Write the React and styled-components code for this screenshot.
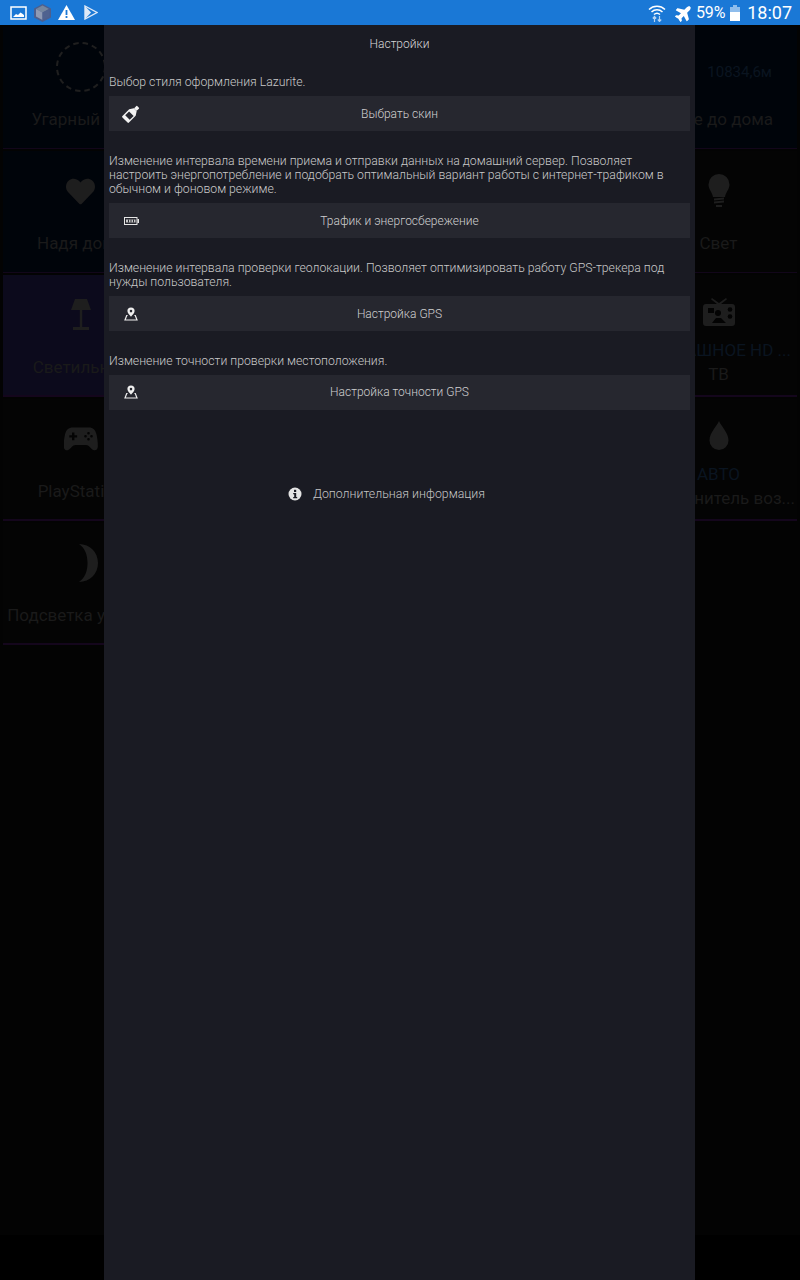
import React from "react";
import styled, { createGlobalStyle } from "styled-components";
import { FaHeart, FaPlane } from "react-icons/fa";

const GlobalStyle = createGlobalStyle`
  html, body {
    margin: 0;
    padding: 0;
    background: #000;
    font-family: Roboto, "Liberation Sans", sans-serif;
  }
`;

const leftTiles = [
  { label: "Угарный газ", icon: "ring", tone: "navy" },
  { label: "Надя дома", icon: "heart", tone: "navy" },
  { label: "Светильник", icon: "lamp", tone: "violet" },
  { label: "PlayStation", icon: "pad", tone: "plain" },
  { label: "Подсветка умного", icon: "moon", tone: "plain" },
];

const rightTiles = [
  { icon: "distance", tone: "navy" },
  { label: "Свет", icon: "bulb", tone: "plain" },
  { state: "ДОМАШНОЕ HD ...", label: "ТВ", icon: "tv", tone: "plain" },
  { state: "АВТО", label: "Увлажнитель воз...", icon: "drop", tone: "plain" },
];

const settings = [
  {
    text: "Выбор стиля оформления Lazurite.",
    button: "Выбрать скин",
    icon: <BottleIcon />,
  },
  {
    text: "Изменение интервала времени приема и отправки данных на домашний сервер. Позволяет настроить энергопотребление и подобрать оптимальный вариант работы с интернет-трафиком в обычном и фоновом режиме.",
    button: "Трафик и энергосбережение",
    icon: <BatteryIcon />,
  },
  {
    text: "Изменение интервала проверки геолокации. Позволяет оптимизировать работу GPS-трекера под нужды пользователя.",
    button: "Настройка GPS",
    icon: <PinIcon />,
  },
  {
    text: "Изменение точности проверки местоположения.",
    button: "Настройка точности GPS",
    icon: <PinIcon />,
  },
];

function BottleIcon() {
  return (
    <svg width="18" height="18" viewBox="0 0 18 18">
      <g transform="rotate(45 9 9)" fill="#f2f2f2">
        <rect x="7.2" y="-1" width="3.6" height="4" rx="0.6" />
        <path d="M7 3h4l2.6 4v9.5a1 1 0 0 1-1 1H5.400a1 1 0 0 1-1-1V7z" />
        <rect x="5.800" y="8.500" width="6.400" height="5.500" fill="#26272f" />
      </g>
    </svg>
  );
}

function BatteryIcon() {
  return (
    <svg width="15" height="8" viewBox="0 0 15 8">
      <rect x="0.5" y="0.5" width="12.500" height="7" fill="none" stroke="#e6e6e6" />
      <rect x="13.500" y="2" width="1.500" height="4" fill="#e6e6e6" />
      <path d="M2 2.500h9.500v3H2z" fill="#c8c8c8" />
      <path d="M4.500 2.500v3M7 2.500v3M9.500 2.500v3" stroke="#26272f" />
    </svg>
  );
}

function PinIcon() {
  return (
    <svg width="14" height="14" viewBox="0 0 14 14">
      <path
        fillRule="evenodd"
        d="M7 0.500a3.600 3.600 0 0 1 3.600 3.600C10.600 6.200 8.500 8 7 9.800 5.500 8 3.400 6.200 3.400 4.100A3.600 3.600 0 0 1 7 0.500zm0 2.300a1.300 1.300 0 1 0 0 2.600 1.300 1.300 0 0 0 0-2.600z"
        fill="#efefef"
      />
      <path d="M3.600 8.500H2.700L1 13h12l-1.700-4.500h-.9" fill="none" stroke="#efefef" strokeWidth="1.200" />
    </svg>
  );
}

function InfoIcon() {
  return (
    <svg width="14" height="14" viewBox="0 0 14 14">
      <circle cx="7" cy="7" r="6.500" fill="#e4e4e4" />
      <rect x="6" y="2.800" width="2.200" height="2.200" fill="#1a1b23" />
      <path d="M5.200 6h3v4h1v1.300H5.200V10h1V7.300h-1z" fill="#1a1b23" />
    </svg>
  );
}

function TileIcon({ name }) {
  const c = "#1e1e1e";
  if (name === "ring")
    return (
      <svg width="50" height="50" viewBox="0 0 50 50">
        <circle cx="25" cy="25" r="24" fill="none" stroke="#1f1f1f" strokeWidth="2" strokeDasharray="5.500 4" />
      </svg>
    );
  if (name === "heart") return <FaHeart size={29} color={c} />;
  if (name === "pad")
    return (
      <svg width="34" height="24" viewBox="0 0 34 24">
        <path
          fillRule="evenodd"
          d="M9 0.500h16c4 0 6.500 2.500 7.500 7 1 4.500 1.500 9 1.300 12.500-.2 2.500-2.300 4-4.500 3-2.500-1.200-4.300-5-7.300-5H11.500c-3 0-4.800 3.800-7.300 5-2.200 1-4.300-.5-4.500-3C-.5 16.500 0 12 1 7.500c1-4.500 3.500-7 8-7zM8 5.500v2.700H5.300v2.400H8v2.700h2.400v-2.700h2.700V8.200h-2.700V5.500zM24.500 5a1.300 1.300 0 1 0 0 2.600 1.300 1.300 0 0 0 0-2.600zm0 6a1.300 1.300 0 1 0 0 2.600 1.300 1.300 0 0 0 0-2.600zm-3-3a1.300 1.300 0 1 0 0 2.600 1.300 1.300 0 0 0 0-2.600zm6 0a1.300 1.300 0 1 0 0 2.600 1.300 1.300 0 0 0 0-2.600z"
          fill={c}
        />
      </svg>
    );
  if (name === "lamp")
    return (
      <svg width="22" height="34" viewBox="0 0 22 34">
        <path d="M5 1h12l4 11H1z M9.800 12h2.400v17H9.800z M3 29h16v3H3z" fill={c} />
      </svg>
    );
  if (name === "moon")
    return (
      <svg width="20" height="40" viewBox="20 0 20 40">
        <path d="M20 1c11 0 19 8.500 19 19s-8 19-19 19c6-4 8.500-11 8.500-19S26 5 20 1z" fill={c} />
      </svg>
    );
  if (name === "bulb")
    return (
      <svg width="22" height="36" viewBox="0 0 22 36">
        <path d="M11 1a10.500 10.500 0 0 1 10.500 10.500c0 5-3.500 7-4.500 12.500H5C4 18.500 .5 16.500 .5 11.500A10.500 10.500 0 0 1 11 1z" fill={c} />
        <path d="M6 26.500l10-1M6 29.500l10-1M8 33h6" stroke={c} strokeWidth="1.800" />
      </svg>
    );
  if (name === "tv")
    return (
      <svg width="32" height="28" viewBox="0 0 32 28">
        <path d="M9 0l7 5 7-5 1 1.200L18 6h11a3 3 0 0 1 3 3v16a3 3 0 0 1-3 3H3a3 3 0 0 1-3-3V9a3 3 0 0 1 3-3h11L8 1.200z" fill={c} />
        <path d="M5 10h6v5H5z M9 25l4-5h5l5 5z" fill="#030303" />
        <circle cx="15" cy="15" r="3" fill="#030303" />
        <circle cx="27" cy="11.500" r="2.300" fill="#030303" />
        <circle cx="27" cy="18.500" r="2.300" fill="#030303" />
      </svg>
    );
  if (name === "drop")
    return (
      <svg width="20" height="30" viewBox="0 0 20 30">
        <path d="M10 0c2 5 9.500 11.500 9.500 19.500a9.500 9.500 0 0 1-19 0C.5 11.500 8 5 10 0z" fill={c} />
      </svg>
    );
  return null;
}

function Tile({ tile, heavy }) {
  if (tile.icon === "distance") {
    return (
      <TileBox $tone={tile.tone}>
        <DistanceValue>10834,6м</DistanceValue>
        <DistanceLabel>Расстояние до дома</DistanceLabel>
      </TileBox>
    );
  }
  return (
    <TileBox $tone={tile.tone} $heavy={heavy}>
      <IconSlot $compact={!!tile.state} $shift={tile.icon === "moon"}>
        <TileIcon name={tile.icon} />
      </IconSlot>
      {tile.state && <TileState>{tile.state}</TileState>}
      <TileLabel>{tile.label}</TileLabel>
    </TileBox>
  );
}

export default function App() {
  return (
    <Page>
      <GlobalStyle />
      <StatusBar>
        <StatusGroup>
          <svg width="17" height="14" viewBox="0 0 17 14">
            <path d="M1 1h15v12H1z" fill="none" stroke="#fff" strokeWidth="1.500" />
            <path d="M3 11l3-3 2 1 2.500-2.500 1.500 1 2 1.500v2z" fill="#fff" />
          </svg>
          <svg width="17" height="18" viewBox="0 0 17 18">
            <path d="M8.500 0L17 4.500v9L8.500 18 0 13.500v-9z" fill="#4c5f8e" />
            <path d="M8.500 1.500L15 5 8.500 8.500 2 5z" fill="#76879f" />
            <path d="M2 5l6.500 3.500V16L2 12.500z" fill="#8e9ab4" />
            <path d="M15 5v7.500L8.500 16V8.500z" fill="#4f628f" />
          </svg>
          <svg width="17" height="15" viewBox="0 0 17 15">
            <path d="M8.500 0L17 15H0z" fill="#fff" />
            <path d="M7.600 5h1.800v5H7.600zM7.600 11h1.800v2H7.600z" fill="#1a78d6" />
          </svg>
          <PlayMark width="14" height="15" viewBox="0 0 14 15">
            <path d="M1 1l12 6.500L1 14z" fill="none" stroke="#dfe9f7" strokeWidth="1.400" />
            <path d="M1 1l6 6.500L1 14z" fill="#dfe9f7" />
          </PlayMark>
        </StatusGroup>
        <StatusGroup $right>
          <svg width="18" height="18" viewBox="0 0 18 18">
            <path d="M1 5.500a11.500 11.500 0 0 1 16 0M3.500 8a8 8 0 0 1 11 0M6 10.500a4.500 4.500 0 0 1 6 0" fill="none" stroke="#fff" strokeWidth="1.500" />
            <path d="M6.500 18v-5M4.800 14.500l1.700-2 1.700 2M11.500 12v5M9.800 15.500l1.700 2 1.700-2" fill="none" stroke="#b8d4f2" strokeWidth="1.200" />
          </svg>
          <PlaneSlot>
            <FaPlane size={18} color="#fff" />
          </PlaneSlot>
          <BatteryText>59%</BatteryText>
          <svg width="10" height="16" viewBox="0 0 10 16">
            <path d="M3 0h4v2h3v14H0V2h3z" fill="#8fbdec" />
            <path d="M0 7h10v9H0z" fill="#fff" />
          </svg>
          <Clock>18:07</Clock>
        </StatusGroup>
      </StatusBar>

      <Board>
        <TileColumn $width={155}>
          {leftTiles.map((tile, i) => (
            <Tile key={tile.label} tile={tile} heavy={i >= 2} />
          ))}
        </TileColumn>
        <TileColumn $width={157}>
          {rightTiles.map((tile, i) => (
            <Tile key={tile.icon} tile={tile} heavy={i >= 2} />
          ))}
        </TileColumn>
      </Board>
      <BottomBar />

      <Drawer>
        <DrawerTitle>Настройки</DrawerTitle>
        {settings.map((item) => (
          <Section key={item.text}>
            <Hint>{item.text}</Hint>
            <SkinButton>
              <ButtonIcon>{item.icon}</ButtonIcon>
              <span>{item.button}</span>
            </SkinButton>
          </Section>
        ))}
        <MoreInfo>
          <InfoIcon />
          <span>Дополнительная информация</span>
        </MoreInfo>
      </Drawer>
    </Page>
  );
}

const Page = styled.div`
  position: relative;
  width: 800px;
  height: 1280px;
  display: flex;
  flex-direction: column;
  overflow: hidden;
`;

const StatusBar = styled.header`
  height: 25px;
  flex: none;
  background: #1a78d6;
  display: flex;
  justify-content: space-between;
  align-items: center;
  padding: 0 8px 0 10px;
`;

const StatusGroup = styled.div`
  display: flex;
  align-items: center;
  gap: ${(p) => (p.$right ? "5px" : "7px")};
  color: #fff;
`;

const PlayMark = styled.svg`
  margin-left: 2px;
`;

const PlaneSlot = styled.span`
  display: flex;
  margin: 0 -2px 0 4px;
  transform: rotate(-45deg);
`;

const BatteryText = styled.span`
  font-size: 16px;
  letter-spacing: -0.2px;
`;

const Clock = styled.span`
  font-size: 18px;
  margin-left: 2px;
`;

const Board = styled.main`
  flex: 1;
  background: #030303;
  display: flex;
  justify-content: space-between;
  padding: 2px 3px 0;
`;

const BottomBar = styled.div`
  height: 45px;
  flex: none;
  background: #000;
`;

const TileColumn = styled.div`
  width: ${(p) => p.$width}px;
  display: flex;
  flex-direction: column;
  gap: 2px;
`;

const tones = {
  navy: "#00040a",
  violet: "#0c0a1c",
  plain: "#040404",
};

const TileBox = styled.div`
  height: 122px;
  box-sizing: border-box;
  background: ${(p) => tones[p.$tone]};
  border-bottom: ${(p) => (p.$heavy ? "2px solid #14061c" : "1px solid #12061a")};
  display: flex;
  flex-direction: column;
  align-items: center;
  overflow: hidden;
`;

const IconSlot = styled.div`
  height: ${(p) => (p.$compact ? 74 : 80)}px;
  flex: none;
  display: flex;
  align-items: center;
  margin-left: ${(p) => (p.$shift ? "16px" : "0")};
`;

const TileLabel = styled.div`
  font-size: 17px;
  line-height: 24px;
  color: #1a1a1a;
  white-space: nowrap;
`;

const TileState = styled.div`
  margin-top: -11px;
  font-size: 17px;
  line-height: 24px;
  color: #0a1420;
  white-space: nowrap;
`;

const DistanceValue = styled.div`
  align-self: flex-end;
  margin: 35px 25px 0 0;
  font-size: 15px;
  line-height: 20px;
  color: #0a1420;
  white-space: nowrap;
`;

const DistanceLabel = styled.div`
  align-self: flex-end;
  margin: 25px 24px 0 0;
  font-size: 17px;
  line-height: 24px;
  color: #1a1a1a;
  white-space: nowrap;
`;

const Drawer = styled.aside`
  position: absolute;
  top: 25px;
  bottom: 0;
  left: 104px;
  width: 591px;
  box-sizing: border-box;
  padding: 12px 5px 0;
  background: #1a1b23;
  color: #c9c9c9;
  font-weight: 300;
  font-size: 12px;
`;

const DrawerTitle = styled.h2`
  margin: 0 0 24px;
  font-size: 12px;
  font-weight: 300;
  line-height: 14px;
  text-align: center;
  color: #d6d6d6;
`;

const Section = styled.section`
  margin-bottom: 22.5px;
`;

const Hint = styled.p`
  margin: 0 0 7px;
  padding-right: 2px;
  font-size: 12.25px;
  line-height: 14.2px;
`;

const SkinButton = styled.div`
  height: 35px;
  background: #26272f;
  display: grid;
  grid-template-columns: 44px 1fr 44px;
  align-items: center;
  text-align: center;
  color: #cfcfcf;
`;

const ButtonIcon = styled.span`
  display: flex;
  justify-content: center;
`;

const MoreInfo = styled.div`
  margin-top: 77px;
  padding-right: 26px;
  height: 14px;
  display: flex;
  justify-content: center;
  align-items: center;
  gap: 11px;
  font-size: 12.35px;
  color: #c4c4c4;
`;
